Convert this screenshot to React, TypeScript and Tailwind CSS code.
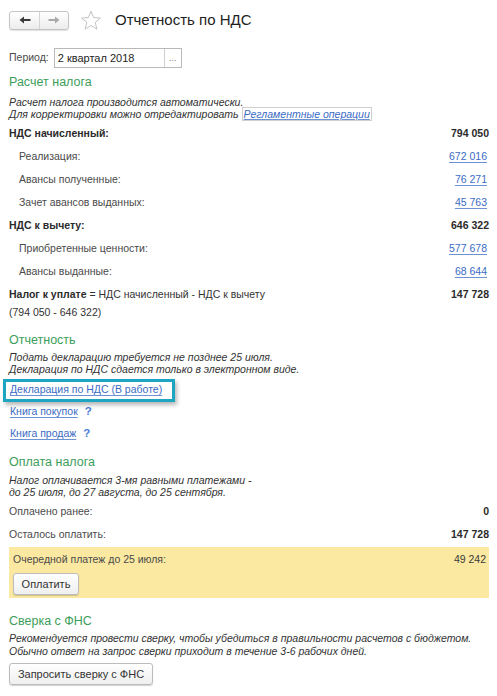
import React from "react";

const FONT = "font-['Liberation_Sans',Arial,sans-serif]";

function NavButtons() {
  return (
    <div className="flex h-[19px] w-[60px] rounded-[3px] border border-[#c4c4c4] bg-gradient-to-b from-white to-[#ececec] shadow-[0_1px_1px_rgba(0,0,0,0.12)]">
      <div className="flex w-[30px] items-center justify-center border-r border-[#d4d4d4]">
        <svg width="12" height="8" viewBox="0 0 12 8">
          <path d="M0.5 4 L5 0.5 L5 3 L11.5 3 L11.5 5 L5 5 L5 7.5 Z" fill="#3a3a3a" />
        </svg>
      </div>
      <div className="flex flex-1 items-center justify-center">
        <svg width="12" height="8" viewBox="0 0 12 8">
          <path d="M11.5 4 L7 0.5 L7 3 L0.5 3 L0.5 5 L7 5 L7 7.5 Z" fill="#a8a8a8" />
        </svg>
      </div>
    </div>
  );
}

function Star() {
  return (
    <svg width="22" height="21" viewBox="0 0 22 21">
      <path
        d="M11 1.2 L13.6 7.6 L20.5 8 L15.2 12.4 L16.9 19.2 L11 15.5 L5.1 19.2 L6.8 12.4 L1.5 8 L8.4 7.6 Z"
        fill="none"
        stroke="#c3c3c3"
        strokeWidth="1"
        strokeLinejoin="round"
      />
    </svg>
  );
}

function SectionTitle({ children, className = "" }: { children: React.ReactNode; className?: string }) {
  return <div className={`h-[18px] text-[12.5px] leading-[18px] text-[#3d9e5a] ${className}`}>{children}</div>;
}

function Note({ lines, className = "" }: { lines: string[]; className?: string }) {
  return (
    <div className={`text-[10.5px] italic leading-[12px] text-[#333] ${className}`}>
      {lines.map((l) => (
        <div key={l}>{l}</div>
      ))}
    </div>
  );
}

function Row({
  label,
  value,
  bold,
  indent,
  link,
}: {
  label: React.ReactNode;
  value: string;
  bold?: boolean;
  indent?: boolean;
  link?: boolean;
}) {
  return (
    <div className="flex h-[23px] items-center justify-between">
      <span className={`${indent ? "pl-[10px]" : ""} ${bold ? "font-bold text-[#2b2b2b]" : "text-[#4a4a4a]"}`}>{label}</span>
      <span
        className={
          link
            ? "mr-[2px] text-[#3a6bc4] underline decoration-[#6d92d4] underline-offset-[2px]"
            : "font-bold text-[#2b2b2b]"
        }
      >
        {value}
      </span>
    </div>
  );
}

function Button({ children, className = "" }: { children: React.ReactNode; className?: string }) {
  return (
    <button
      className={`flex h-[22px] items-center justify-center rounded-[3px] border border-[#bcbcbc] bg-gradient-to-b from-white to-[#efefef] text-[11px] text-[#333] shadow-[0_1px_1px_rgba(0,0,0,0.18)] ${className}`}
    >
      {children}
    </button>
  );
}

function LinkLine({ text, help }: { text: string; help?: boolean }) {
  return (
    <div className="flex h-[22px] items-center">
      <span className="pl-[1px] text-[#3a6bc4] underline decoration-[#6d92d4] underline-offset-[2px]">{text}</span>
      {help && <span className="ml-[7px] text-[11.5px] font-bold text-[#4b7fd6]">?</span>}
    </div>
  );
}

export default function App() {
  return (
    <div className={`${FONT} h-[696px] w-[497px] overflow-hidden bg-white pl-[9px] pr-[8px] text-[10.5px] text-[#333]`}>
      <div className="flex h-[40px] items-center">
        <NavButtons />
        <div className="ml-[11px] mt-[1px]">
          <Star />
        </div>
        <div className="ml-[13px] text-[15px] text-[#1e1e1e]">Отчетность по НДС</div>
      </div>

      <div className="mt-[8px] flex h-[20px] items-center">
        <span className="text-[#4a4a4a]">Период:</span>
        <div className="ml-[5px] flex h-[20px] w-[128px] border border-[#b9b9b9]">
          <div className="flex flex-1 items-center pl-[3px] text-[11px] text-[#1e1e1e]">2 квартал 2018</div>
          <div className="flex w-[17px] items-center justify-center border-l border-[#cfcfcf] text-[9px] leading-none text-[#777]">
            ...
          </div>
        </div>
      </div>

      <SectionTitle className="mt-[5px]">Расчет налога</SectionTitle>
      <div className="mt-[5px] text-[10.5px] italic leading-[12px] text-[#333]">
        <div>Расчет налога производится автоматически.</div>
        <div>
          Для корректировки можно отредактировать{" "}
          <span className="border border-[#d0d0d0] px-[1px] text-[#3a6bc4] underline decoration-[#6d92d4]">
            Регламентные операции
          </span>
        </div>
      </div>

      <div className="mt-[2px]">
        <Row label="НДС начисленный:" value="794 050" bold />
        <Row label="Реализация:" value="672 016" indent link />
        <Row label="Авансы полученные:" value="76 271" indent link />
        <Row label="Зачет авансов выданных:" value="45 763" indent link />
        <Row label="НДС к вычету:" value="646 322" bold />
        <Row label="Приобретенные ценности:" value="577 678" indent link />
        <Row label="Авансы выданные:" value="68 644" indent link />
        <Row
          label={
            <span className="font-normal text-[#333]">
              <b className="text-[#2b2b2b]">Налог к уплате</b> = НДС начисленный - НДС к вычету
            </span>
          }
          value="147 728"
        />
      </div>
      <div className="flex h-[14px] items-center text-[#333]">(794 050 - 646 322)</div>

      <SectionTitle className="mt-[11px]">Отчетность</SectionTitle>
      <Note
        className="mt-[2px]"
        lines={["Подать декларацию требуется не позднее 25 июля.", "Декларация по НДС сдается только в электронном виде."]}
      />

      <div className="mt-[4px]">
        <div className="relative">
          <div className="pointer-events-none absolute -left-[6px] top-0 h-[23px] w-[172px] border-[3px] border-[#1ea5c2] shadow-[2px_3px_4px_rgba(0,0,0,0.28)]" />
          <LinkLine text="Декларация по НДС (В работе)" />
        </div>
        <LinkLine text="Книга покупок" help />
        <LinkLine text="Книга продаж" help />
      </div>

      <SectionTitle className="mt-[8px]">Оплата налога</SectionTitle>
      <Note
        className="mt-[3px]"
        lines={["Налог оплачивается 3-мя равными платежами -", "до 25 июля, до 27 августа, до 25 сентября."]}
      />

      <div className="mt-[2px]">
        <Row label="Оплачено ранее:" value="0" />
        <Row label="Осталось оплатить:" value="147 728" />
      </div>

      <div className="mt-[1px] h-[51px] bg-[#fbe9a1] px-[4px]">
        <div className="flex h-[25px] items-center justify-between text-[#4a4a4a]">
          <span>Очередной платеж до 25 июля:</span>
          <span className="mr-[-1px] text-[#3a3a3a]">49 242</span>
        </div>
        <Button className="mt-[1px] w-[66px]">Оплатить</Button>
      </div>

      <SectionTitle className="mt-[14px]">Сверка с ФНС</SectionTitle>
      <div className="mt-[2px] text-[10.5px] italic leading-[13px] text-[#333]">
        <div>Рекомендуется провести сверку, чтобы убедиться в правильности расчетов с бюджетом.</div>
        <div>Обычно ответ на запрос сверки приходит в течение 3-6 рабочих дней.</div>
      </div>
      <Button className="mt-[5px] w-[144px]">Запросить сверку с ФНС</Button>
    </div>
  );
}
